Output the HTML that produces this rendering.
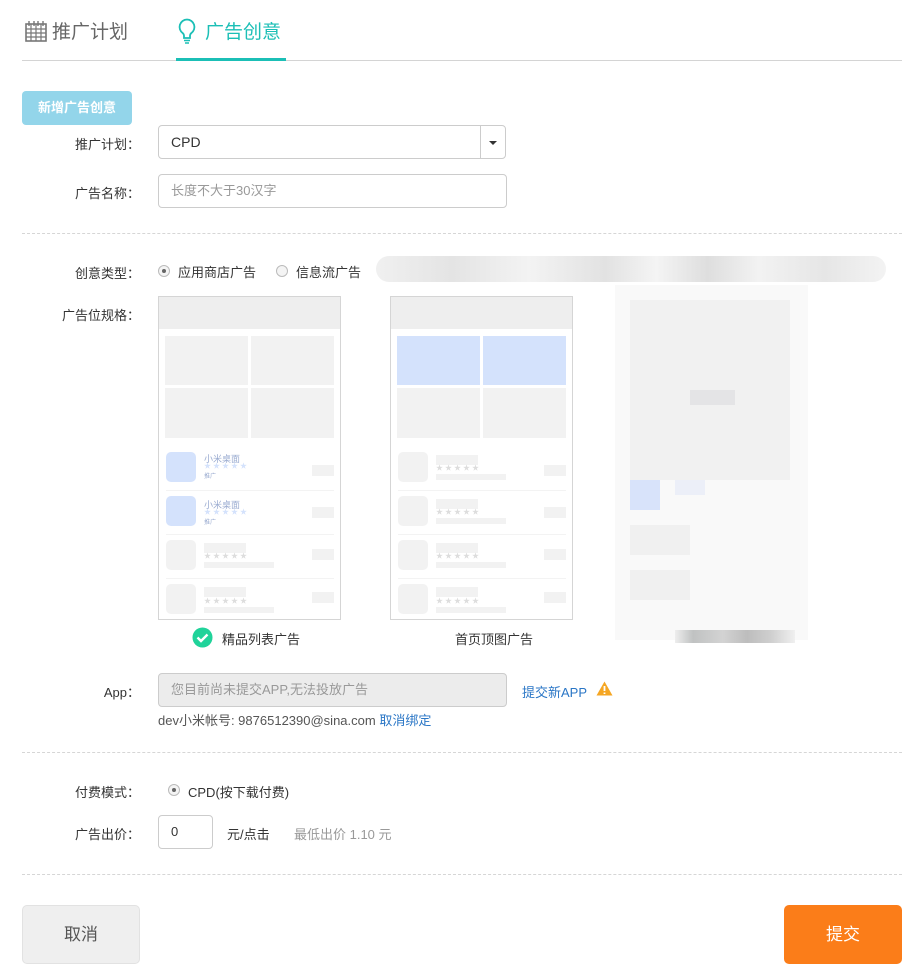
<!DOCTYPE html>
<html><head><meta charset="utf-8">
<style>
*{margin:0;padding:0;box-sizing:border-box}
body{width:922px;height:972px;background:#fff;font-family:"Liberation Sans","Noto Sans CJK SC",sans-serif;color:#333;position:relative;overflow:hidden}
.a{position:absolute}
.lbl{position:absolute;font-size:13px;color:#333;text-align:right;width:120px}
.inp{position:absolute;border:1px solid #ccc;border-radius:4px;height:34px;font-size:14px;line-height:32px;padding-left:12px}
.dash{position:absolute;left:22px;width:880px;border-top:1px dashed #d6d6d6;height:0}
.mk{position:absolute;width:183px;height:324px;border:1px solid #d5d5d5;background:#fff}
.mk div{position:absolute}
.g{background:#f2f2f2}
.b{background:#d4e2fc}
.radio{position:absolute;width:12px;height:12px;border:1px solid #bbb;border-radius:50%;background:#f4f4f4}
.radio.on::after{content:"";position:absolute;left:3px;top:3px;width:4px;height:4px;border-radius:50%;background:#666}
.st{font-size:7px;color:#ddd;letter-spacing:2px;line-height:8px}
</style></head><body>

<!-- tabs -->
<svg class="a" style="left:25px;top:20px" width="22" height="22" viewBox="0 0 22 22"><rect x="1" y="4" width="20" height="17" fill="none" stroke="#777" stroke-width="1.6"/><path d="M1 9H21M1 13H21M1 17H21M6 4V21M11 4V21M16 4V21" stroke="#777" stroke-width="1.2"/><path d="M4 1v5M9 1v5M13 1v5M18 1v5" stroke="#777" stroke-width="1.4"/></svg>
<div class="a" style="left:52px;top:17px;font-size:19px;color:#666">推广计划</div>
<svg class="a" style="left:178px;top:18px" width="18" height="27" viewBox="0 0 18 27"><path d="M9 1.5a7.5 7.5 0 0 0-4.3 13.6c.9.8 1.3 1.7 1.3 3V20h6v-1.9c0-1.3.4-2.2 1.3-3A7.5 7.5 0 0 0 9 1.5z" fill="none" stroke="#1bbfb6" stroke-width="1.8"/><path d="M6 22.5h6M7 25h4" stroke="#1bbfb6" stroke-width="1.6"/></svg>
<div class="a" style="left:205px;top:17px;font-size:19px;color:#1bbfb6">广告创意</div>
<div class="a" style="left:22px;top:60px;width:880px;height:1px;background:#d4d4d4"></div>
<div class="a" style="left:176px;top:58px;width:110px;height:3px;background:#1bbfb6"></div>

<div class="a" style="left:22px;top:91px;width:110px;height:34px;background:#93d5ea;border-radius:4px;color:#fff;font-size:13px;font-weight:bold;line-height:34px;text-align:center">新增广告创意</div>

<div class="lbl" style="left:20px;top:134px">推广计划：</div>
<div class="inp" style="left:158px;top:125px;width:348px">CPD</div>
<div class="a" style="left:480px;top:126px;width:1px;height:32px;background:#ccc"></div>
<div class="a" style="left:489px;top:141px;border:4px solid transparent;border-top:4px solid #333;border-bottom:0"></div>
<div class="lbl" style="left:20px;top:183px">广告名称：</div>
<div class="inp" style="left:158px;top:174px;width:349px;color:#999;font-size:13px">长度不大于30汉字</div>

<div class="dash" style="top:233px"></div>

<div class="lbl" style="left:20px;top:263px">创意类型：</div>
<div class="radio on" style="left:158px;top:265px"></div>
<div class="a" style="left:178px;top:262px;font-size:13px">应用商店广告</div>
<div class="radio" style="left:276px;top:265px"></div>
<div class="a" style="left:296px;top:262px;font-size:13px">信息流广告</div>
<div class="a" style="left:376px;top:256px;width:510px;height:26px;border-radius:13px;background:linear-gradient(90deg,#f0f0f0,#e4e4e4 15%,#f3f3f3 30%,#e2e2e2 45%,#f4f4f4 55%,#dedede 65%,#f2f2f2 75%,#e6e6e6 88%,#f3f3f3)"></div>

<div class="lbl" style="left:20px;top:305px">广告位规格：</div>

<!-- mockup 1 -->
<div class="mk" style="left:158px;top:296px">
<div style="left:0;top:0;width:181px;height:32px;background:#eee"></div>
<div class="g" style="left:6px;top:39px;width:83px;height:49px"></div>
<div class="g" style="left:92px;top:39px;width:83px;height:49px"></div>
<div class="g" style="left:6px;top:91px;width:83px;height:50px"></div>
<div class="g" style="left:92px;top:91px;width:83px;height:50px"></div>
<div class="b" style="left:7px;top:155px;width:30px;height:30px;border-radius:5px"></div>
<div style="left:45px;top:155px;font-size:9px;color:#9aabd0">小米桌面</div>
<div class="st" style="left:45px;top:166px;color:#d4e2fc">★★★★★</div>
<div style="left:45px;top:174px;font-size:6px;color:#9aabd0">推广</div>
<div class="g" style="left:153px;top:168px;width:22px;height:11px"></div>
<div style="left:7px;top:193px;width:168px;height:1px;background:#f3f3f3"></div>
<div class="b" style="left:7px;top:199px;width:30px;height:30px;border-radius:5px"></div>
<div style="left:45px;top:201px;font-size:9px;color:#9aabd0">小米桌面</div>
<div class="st" style="left:45px;top:212px;color:#d4e2fc">★★★★★</div>
<div style="left:45px;top:220px;font-size:6px;color:#9aabd0">推广</div>
<div class="g" style="left:153px;top:210px;width:22px;height:11px"></div>
<div style="left:7px;top:237px;width:168px;height:1px;background:#f3f3f3"></div>
<div class="g" style="left:7px;top:243px;width:30px;height:30px;border-radius:5px"></div>
<div class="g" style="left:45px;top:246px;width:42px;height:10px"></div>
<div class="st" style="left:45px;top:256px">★★★★★</div>
<div class="g" style="left:45px;top:265px;width:70px;height:6px"></div>
<div class="g" style="left:153px;top:252px;width:22px;height:11px"></div>
<div style="left:7px;top:281px;width:168px;height:1px;background:#f3f3f3"></div>
<div class="g" style="left:7px;top:287px;width:30px;height:30px;border-radius:5px"></div>
<div class="g" style="left:45px;top:290px;width:42px;height:10px"></div>
<div class="st" style="left:45px;top:301px">★★★★★</div>
<div class="g" style="left:45px;top:310px;width:70px;height:6px"></div>
<div class="g" style="left:153px;top:295px;width:22px;height:11px"></div>
</div>

<!-- mockup 2 -->
<div class="mk" style="left:390px;top:296px">
<div style="left:0;top:0;width:181px;height:32px;background:#eee"></div>
<div class="b" style="left:6px;top:39px;width:83px;height:49px"></div>
<div class="b" style="left:92px;top:39px;width:83px;height:49px"></div>
<div class="g" style="left:6px;top:91px;width:83px;height:50px"></div>
<div class="g" style="left:92px;top:91px;width:83px;height:50px"></div>
<div class="g" style="left:7px;top:155px;width:30px;height:30px;border-radius:5px"></div>
<div class="g" style="left:45px;top:158px;width:42px;height:10px"></div>
<div class="st" style="left:45px;top:168px">★★★★★</div>
<div class="g" style="left:45px;top:177px;width:70px;height:6px"></div>
<div class="g" style="left:153px;top:168px;width:22px;height:11px"></div>
<div style="left:7px;top:193px;width:168px;height:1px;background:#f3f3f3"></div>
<div class="g" style="left:7px;top:199px;width:30px;height:30px;border-radius:5px"></div>
<div class="g" style="left:45px;top:202px;width:42px;height:10px"></div>
<div class="st" style="left:45px;top:212px">★★★★★</div>
<div class="g" style="left:45px;top:221px;width:70px;height:6px"></div>
<div class="g" style="left:153px;top:210px;width:22px;height:11px"></div>
<div style="left:7px;top:237px;width:168px;height:1px;background:#f3f3f3"></div>
<div class="g" style="left:7px;top:243px;width:30px;height:30px;border-radius:5px"></div>
<div class="g" style="left:45px;top:246px;width:42px;height:10px"></div>
<div class="st" style="left:45px;top:256px">★★★★★</div>
<div class="g" style="left:45px;top:265px;width:70px;height:6px"></div>
<div class="g" style="left:153px;top:252px;width:22px;height:11px"></div>
<div style="left:7px;top:281px;width:168px;height:1px;background:#f3f3f3"></div>
<div class="g" style="left:7px;top:287px;width:30px;height:30px;border-radius:5px"></div>
<div class="g" style="left:45px;top:290px;width:42px;height:10px"></div>
<div class="st" style="left:45px;top:301px">★★★★★</div>
<div class="g" style="left:45px;top:310px;width:70px;height:6px"></div>
<div class="g" style="left:153px;top:295px;width:22px;height:11px"></div>
</div>

<!-- blurred mockup 3 -->
<div class="a" style="left:615px;top:285px;width:193px;height:355px;background:#f9f9f9"></div>
<div class="a" style="left:630px;top:300px;width:160px;height:180px;background:#f1f1f1"></div>
<div class="a" style="left:690px;top:390px;width:45px;height:15px;background:#e4e4e6"></div>
<div class="a" style="left:630px;top:480px;width:30px;height:30px;background:#d8e3fa"></div>
<div class="a" style="left:675px;top:480px;width:30px;height:15px;background:#eceff8"></div>
<div class="a" style="left:630px;top:525px;width:60px;height:30px;background:#f0f0f0"></div>
<div class="a" style="left:630px;top:570px;width:60px;height:30px;background:#f0f0f0"></div>
<div class="a" style="left:675px;top:630px;width:120px;height:13px;background:linear-gradient(90deg,#eee,#c0c2c2 15%,#d3d3d3 40%,#bdbdbd 60%,#cfcfcf 80%,#f0f0f0)"></div>

<svg class="a" style="left:192px;top:627px" width="21" height="21" viewBox="0 0 21 21"><circle cx="10.5" cy="10.5" r="10" fill="#20d39a"/><path d="M5.5 10.5l3.5 3.5 6.5-6.5" fill="none" stroke="#fff" stroke-width="2.4"/></svg>
<div class="a" style="left:222px;top:629px;font-size:13px">精品列表广告</div>
<div class="a" style="left:455px;top:629px;font-size:13px">首页顶图广告</div>

<div class="lbl" style="left:20px;top:682px">App：</div>
<div class="inp" style="left:158px;top:673px;width:349px;background:#ececec;color:#999;font-size:13px">您目前尚未提交APP,无法投放广告</div>
<div class="a" style="left:522px;top:682px;font-size:13px;color:#2a76c6">提交新APP</div>
<svg class="a" style="left:596px;top:681px" width="17" height="15" viewBox="0 0 17 15"><path d="M8.5 0.5L16.5 14.5H0.5Z" fill="#f5a623"/><path d="M8.5 5v5M8.5 11.5v1.5" stroke="#fff" stroke-width="1.8"/></svg>
<div class="a" style="left:158px;top:710px;font-size:13px;color:#555">dev小米帐号: 9876512390@sina.com <span style="color:#2a76c6">取消绑定</span></div>

<div class="dash" style="top:752px"></div>

<div class="lbl" style="left:20px;top:782px">付费模式：</div>
<div class="radio on" style="left:168px;top:784px"></div>
<div class="a" style="left:188px;top:782px;font-size:13px">CPD(按下载付费)</div>
<div class="lbl" style="left:20px;top:824px">广告出价：</div>
<div class="inp" style="left:158px;top:815px;width:55px;font-size:13px">0</div>
<div class="a" style="left:227px;top:824px;font-size:13px">元/点击</div>
<div class="a" style="left:294px;top:824px;font-size:13px;color:#999">最低出价 1.10 元</div>

<div class="dash" style="top:874px"></div>

<div class="a" style="left:22px;top:905px;width:118px;height:59px;background:#efefef;border:1px solid #e2e2e2;border-radius:5px;font-size:17px;line-height:57px;text-align:center;color:#555">取消</div>
<div class="a" style="left:784px;top:905px;width:118px;height:59px;background:#fb7d19;border-radius:5px;font-size:17px;line-height:59px;text-align:center;color:#fff">提交</div>
</body></html>
